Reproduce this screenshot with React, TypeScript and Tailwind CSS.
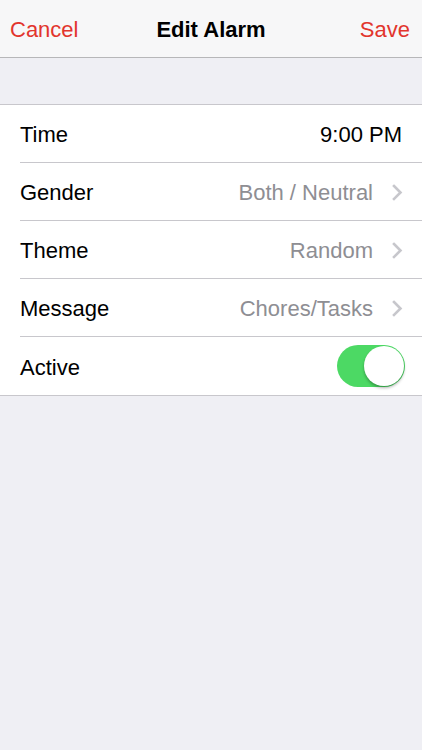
import { useState } from "react"

type Row = {
    label: string
    value?: string
    chevron?: boolean
    dark?: boolean
}

const rows: Row[] = [
    { label: "Time", value: "9:00 PM", dark: true },
    { label: "Gender", value: "Both / Neutral", chevron: true },
    { label: "Theme", value: "Random", chevron: true },
    { label: "Message", value: "Chores/Tasks", chevron: true },
]

const Chevron = () => (
    <svg width="11" height="17" viewBox="0 0 11 17" className="ml-[19px] mr-[-1px] shrink-0">
        <polyline
            points="2,2 8.5,8.5 2,15"
            fill="none"
            stroke="#c7c7cc"
            strokeWidth="2.6"
            strokeLinecap="square"
        />
    </svg>
)

const App = () => {
    const [active, setActive] = useState<boolean>(true)

    return (
        <div
            className="w-[422px] h-[750px] bg-[#efeff4] flex flex-col text-[22px]"
            style={{ fontFamily: '"Liberation Sans", Arial, sans-serif' }}
        >
            {/* NAV BAR */}
            <div className="h-[58px] bg-[#f7f7f8] border-b border-[#b7b7b9] flex items-center justify-between px-[10px] pt-[2px] relative">
                <button className="text-[#e2352d]">Cancel</button>
                <div className="absolute left-0 right-0 text-center font-bold text-black pointer-events-none">
                    Edit Alarm
                </div>
                <button className="text-[#e2352d] pr-[2px]">Save</button>
            </div>

            <div className="h-[46px]" />

            {/* SETTINGS */}
            <div className="bg-white border-y border-[#c8c7cc]">
                {rows.map((row) => (
                    <div key={row.label} className="pl-[20px]">
                        <div className="h-[58px] flex items-center justify-between pr-[20px] pt-[2px] border-b border-[#c8c7cc]">
                            <span className="text-black">{row.label}</span>
                            <div className="flex items-center">
                                <span className={row.dark ? "text-black" : "text-[#8e8e93]"}>{row.value}</span>
                                {row.chevron && <Chevron />}
                            </div>
                        </div>
                    </div>
                ))}
                <div className="h-[58px] flex items-center justify-between pl-[20px] pr-[17px]">
                    <span className="text-black pt-[2px]">Active</span>
                    <button
                        onClick={() => setActive((a) => !a)}
                        className={`w-[68px] h-[42px] rounded-full relative transition-colors ${
                            active ? "bg-[#4cd964]" : "bg-[#e5e5ea]"
                        }`}
                    >
                        <span
                            className={`absolute top-[1px] w-[40px] h-[40px] rounded-full bg-white shadow-[0_2px_3px_rgba(0,0,0,0.3)] transition-all ${
                                active ? "left-[27px]" : "left-[1px]"
                            }`}
                        />
                    </button>
                </div>
            </div>
        </div>
    )
}

export default App
